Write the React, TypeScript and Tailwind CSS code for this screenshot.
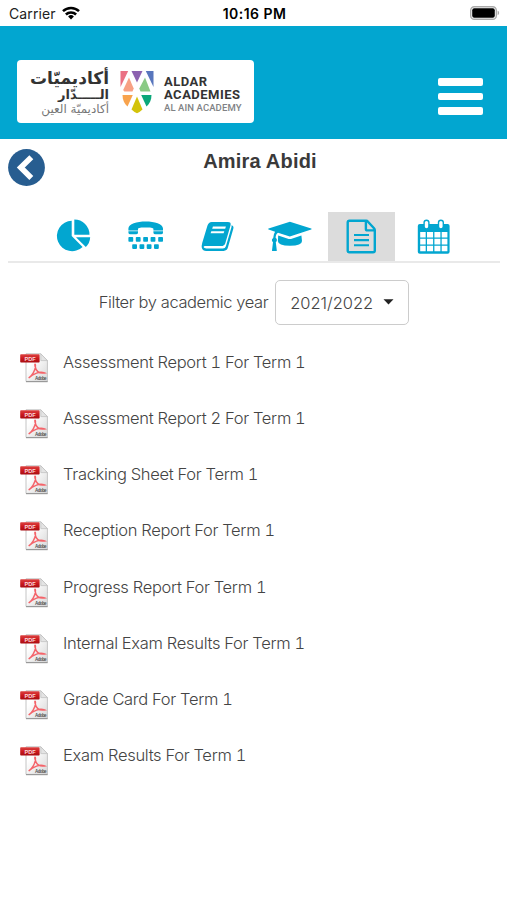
import type { ReactNode } from "react";

const reports = [
  "Assessment Report 1 For Term 1",
  "Assessment Report 2 For Term 1",
  "Tracking Sheet For Term 1",
  "Reception Report For Term 1",
  "Progress Report For Term 1",
  "Internal Exam Results For Term 1",
  "Grade Card For Term 1",
  "Exam Results For Term 1",
];

function StatusBar() {
  return (
    <div className="h-[26px] grid grid-cols-3 items-center pl-[9px] pr-[7px] pt-0.5 text-black">
      <div className="flex items-center gap-1.5">
        <span className="text-[14px] leading-none tracking-[0.12px] text-[#222]">Carrier</span>
        <svg className="-mt-0.5" width="18" height="14" viewBox="0 0 18 14" fill="none" stroke="#000" strokeWidth="2.5">
          <path d="M1 5.2a11.4 11.4 0 0 1 16 0" />
          <path d="M3.9 8.5a7.2 7.2 0 0 1 10.2 0" />
          <path d="M9 13.4l-2.9-2.9a4.1 4.1 0 0 1 5.8 0z" fill="#000" stroke="none" />
        </svg>
      </div>
      <span className="text-center text-[14px] leading-none font-semibold tracking-[0.45px] whitespace-nowrap">
        10:16 PM
      </span>
      <svg className="justify-self-end -mt-0.5" width="30" height="14" viewBox="0 0 30 14">
        <rect x="0.7" y="0.7" width="25.6" height="12.6" rx="3.6" fill="#fff" stroke="#aaa" strokeWidth="1.4" />
        <rect x="2.2" y="2.2" width="22.6" height="9.6" rx="2" fill="#000" />
        <path d="M27.6 4.8c2 .6 2 3.8 0 4.4z" fill="#aaa" />
      </svg>
    </div>
  );
}

function Shield() {
  return (
    <svg className="shrink-0" width="34" height="44" viewBox="0 0 34 44">
      <path d="M0.5 1H8.2L0.5 17z" fill="#ea7184" />
      <path d="M11.5 1H22.5L17 12.5z" fill="#8c62b0" />
      <path d="M25.8 1H33.5V17z" fill="#5876bd" />
      <path d="M9 7.5L13.7 18.5L12.5 21.5H4.3L3.2 20z" fill="#f7a184" />
      <path d="M25 7.5L30.5 21.5H20.5L19.3 18.5z" fill="#8aca85" />
      <path d="M2.5 25H12.8L7.5 36.5C4.3 33.7 2.5 30 2.5 25z" fill="#f8a34d" />
      <path d="M21.2 25H31.5C31.5 30 29.7 33.7 26.5 36.5z" fill="#0ba77a" />
      <path d="M17 26.5L22.5 39.5Q20 42 17 43.3Q14 42 11.5 39.5z" fill="#d3c30a" />
    </svg>
  );
}

function Header() {
  return (
    <header className="h-[113px] bg-[#02a6d0] flex items-start justify-between pl-[17px] pr-6">
      <div className="mt-[34px] w-[237px] h-[63px] bg-white rounded-[4px] flex items-start pl-[12px] pt-[10px]">
        <div
          dir="rtl"
          lang="ar"
          className="w-[80px] font-['DejaVu_Sans',sans-serif] font-bold text-[#333] whitespace-nowrap"
        >
          <p className="text-[17px] leading-[17px]">أكاديميّات</p>
          <p className="text-[13px] leading-[15px]">الـــــدّار</p>
          <p className="text-[12px] leading-[15px] font-normal text-[#777]">أكاديميّة العين</p>
        </div>
        <div className="ml-[11px]">
          <Shield />
        </div>
        <div className="ml-[10px] pt-[5px] font-['Roboto',sans-serif] whitespace-nowrap">
          <p className="text-[13px] leading-[13px] font-bold tracking-[0.5px] text-[#333]">ALDAR</p>
          <p className="text-[13px] leading-[13px] font-bold tracking-[0.5px] text-[#333]">ACADEMIES</p>
          <p className="text-[9.5px] leading-[14px] font-medium tracking-[0.1px] text-[#808285]">AL AIN ACADEMY</p>
        </div>
      </div>
      <button className="mt-[52px] flex flex-col gap-[7px]" aria-label="Menu">
        <span className="block w-[45px] h-[7.7px] rounded-[2px] bg-white" />
        <span className="block w-[45px] h-[7.7px] rounded-[2px] bg-white" />
        <span className="block w-[45px] h-[7.7px] rounded-[2px] bg-white" />
      </button>
    </header>
  );
}

function Tab({ active, children }: { active?: boolean; children: ReactNode }) {
  return (
    <button className={active ? "w-[67px] h-[49px] bg-[#dcdcdc]" : "w-[67px] h-[49px]"}>
      <svg width="67" height="49" viewBox="0 0 67 49" fill="#02a6d0">
        {children}
      </svg>
    </button>
  );
}

function Tabs() {
  return (
    <nav className="ml-2 mr-[7px] pl-8 flex gap-[5px] border-b-2 border-[#e9e9e9]">
      {/* pie chart */}
      <Tab>
        <path d="M31.7 8.8A15.2 15.2 0 1 0 42.6 35L31.7 24z" />
        <path d="M34.3 7.5A15.2 15.2 0 0 1 49.5 22.8H34.3z" />
        <path d="M36 25.3H50.2A15 15 0 0 1 45.8 35.1z" />
      </Tab>
      {/* teletype */}
      <Tab>
        <path d="M16.4 18.5V16.6C16.4 12 25 9.6 33.7 9.6S51 12 51 16.6V18.5H41.4V16.7C41.4 15.6 38 15.4 33.7 15.4S26 15.6 26 16.7V18.5z" />
        <path d="M16.4 19.3H26V20.4Q26 22.3 24 22.3H18.4Q16.4 22.3 16.4 20.4zM41.4 19.3H51V20.4Q51 22.3 49 22.3H43.4Q41.4 22.3 41.4 20.4z" />
        {[16.4, 23.8, 31.2, 38.6, 46.2].map((x) => (
          <rect key={x} x={x} y="25" width="4.8" height="4.7" rx="0.8" />
        ))}
        {[20.2, 27.5, 34.7, 42].map((x) => (
          <rect key={x} x={x} y="32.2" width="4.8" height="4.7" rx="0.8" />
        ))}
      </Tab>
      {/* book */}
      <Tab>
        <path
          fillRule="evenodd"
          d="M27.8 10H43.8Q47.5 10 46.5 13.4L41.3 31.2Q40.4 34 37.2 34H21.4Q19.2 34 19.7 35.3Q20.1 36.4 22.2 36.4H38.8Q41.2 36.4 41.9 34.2L47.3 15.8Q47.7 14.5 47.5 13.2Q50.1 14.1 49.3 16.8L43.9 35.6Q43 38.9 39.6 38.9H22.2Q18.8 38.9 17.8 35.7Q17.4 34.2 18.2 31L23.4 13.8Q24.5 10 27.8 10zM28.9 14.6L28.2 16.7H41.2L41.9 14.6zM27.3 19.2L26.6 21.3H39.6L40.3 19.2z"
        />
      </Tab>
      {/* graduation cap */}
      <Tab>
        <path d="M33.9 9.8L55.2 16.6Q56.2 17 55.2 17.5L34.6 24.3Q33.8 24.5 33 24.3L22 20.7Q19.8 21.7 19.6 25.8Q20.9 26.6 20.9 28.1Q20.9 29.5 19.8 30.3L20.8 38.4Q20.8 39.1 20.2 39.1H16.6Q15.9 39.1 16 38.4L17 30.3Q15.9 29.5 15.9 28.1Q15.9 26.6 17.2 25.9Q17.4 22.1 19.1 19.8L12.6 17.6Q11.5 17 12.6 16.6z" />
        <path d="M22.2 23.5L32.7 26.9Q33.8 27.2 35 26.9L45.4 23.5L46 29Q46 33.8 34 33.8T21.9 29z" />
      </Tab>
      {/* report */}
      <Tab active>
        <g fill="none" stroke="#02a6d0" strokeWidth="2.4" strokeLinejoin="round">
          <path d="M38.2 8.8H21.5Q19.7 8.8 19.7 10.6V38.5Q19.7 40.3 21.5 40.3H45Q46.8 40.3 46.8 38.5V18.2Q46.8 17.2 46 16.3L40 9.8Q39.2 8.8 38.2 8.8zM37.9 9.4V17Q37.9 18.4 39.3 18.4H46.3" />
          <path d="M26 23H41M26 28.1H41M26 33.3H41" strokeWidth="2.1" />
        </g>
      </Tab>
      {/* calendar */}
      <Tab>
        <rect x="17.8" y="12" width="31.8" height="29.7" rx="2" />
        <path
          fill="#fff"
          d="M20.2 20.1H25.7V25.5H20.2zM27 20.1H33.1V25.5H27zM34.4 20.1H40.4V25.5H34.4zM41.7 20.1H47.4V25.5H41.7zM20.2 26.8H25.7V32.5H20.2zM27 26.8H33.1V32.5H27zM34.4 26.8H40.4V32.5H34.4zM41.7 26.8H47.4V32.5H41.7zM20.2 33.8H25.7V39.3H20.2zM27 33.8H33.1V39.3H27zM34.4 33.8H40.4V39.3H34.4zM41.7 33.8H47.4V39.3H41.7z"
        />
        <rect x="24.1" y="8.2" width="4.8" height="8.8" rx="2.4" fill="#fff" stroke="#02a6d0" strokeWidth="1.4" />
        <rect x="38.5" y="8.2" width="4.8" height="8.8" rx="2.4" fill="#fff" stroke="#02a6d0" strokeWidth="1.4" />
      </Tab>
    </nav>
  );
}

function PdfIcon() {
  return (
    <svg className="shrink-0" width="29" height="30" viewBox="0 0 29 30">
      <defs>
        <linearGradient id="page" x1="0" y1="0" x2="1" y2="1">
          <stop offset="0.3" stopColor="#fff" />
          <stop offset="1" stopColor="#d6d6d6" />
        </linearGradient>
        <linearGradient id="band" x1="0" y1="0" x2="0" y2="1">
          <stop offset="0" stopColor="#dc4443" />
          <stop offset="0.5" stopColor="#cc1a1e" />
          <stop offset="1" stopColor="#a80d12" />
        </linearGradient>
      </defs>
      <path d="M6 0.8H20.8L27.4 7.6V28.4H6z" fill="url(#page)" stroke="#c4c4c4" strokeWidth="1" />
      <path d="M20.8 0.8V7.6H27.4z" fill="#e4e4e4" stroke="#bdbdbd" strokeWidth="0.7" />
      <path d="M6 28.6H27.6" stroke="#999" strokeWidth="1.2" />
      <path
        d="M8.7 25C12 23 15.3 17.5 15.5 13C15.5 10 14.4 11 15 13C16 18 19.5 20.8 24.6 20C20 18 13 20.5 8.7 25z"
        fill="none"
        stroke="#f4646a"
        strokeWidth="1.4"
      />
      <rect x="0.2" y="1.2" width="19.4" height="8.3" rx="0.8" fill="url(#band)" />
      <text x="4.6" y="7.5" fontSize="5.6" fontWeight="700" fill="#fbdcdc" fontFamily="Liberation Sans, sans-serif">
        PDF
      </text>
      <text x="15" y="27" fontSize="4.5" fontWeight="700" fill="#555" fontFamily="Liberation Sans, sans-serif" textLength="11.6">
        Adobe
      </text>
    </svg>
  );
}

export default function App() {
  return (
    <div className="w-full h-[900px] bg-white overflow-hidden font-['Inter','Liberation_Sans',sans-serif]">
      <StatusBar />
      <Header />

      <div className="h-[73px] grid grid-cols-[37px_1fr_24px] items-start px-2 pt-[10px]">
        <button aria-label="Back">
          <svg width="37" height="37" viewBox="0 0 37 37">
            <circle cx="18.5" cy="18.5" r="18.4" fill="#275d90" />
            <path d="M23.3 8.3L12.8 18.6L23.3 28.9" fill="none" stroke="#fff" strokeWidth="5.6" />
          </svg>
        </button>
        <h1 className="-mt-px text-center text-[20px] leading-[26px] font-bold tracking-[0.2px] text-[#3a3a3a] font-['Liberation_Sans',sans-serif]">
          Amira Abidi
        </h1>
      </div>

      <Tabs />

      <div className="mt-[17px] pl-px flex items-center justify-center gap-[7px] font-light text-[#444]">
        <label className="text-[16.5px] tracking-[-0.4px] whitespace-nowrap">Filter by academic year</label>
        <button className="w-[134px] h-[45px] flex items-center justify-between px-[14px] border border-[#ccc] rounded-[5px] text-[16.5px]">
          <span className="pt-0.5 tracking-[-0.05px]">2021/2022</span>
          <svg className="-mt-0.5" width="11" height="6" viewBox="0 0 11 6">
            <path d="M0.5 0.3H10.5L5.5 5.6z" fill="#222" />
          </svg>
        </button>
      </div>

      <ul className="mt-[27px] pl-5">
        {reports.map((name) => (
          <li key={name} className="h-[56.14px] flex items-start gap-[14px]">
            <div className="pt-px">
              <PdfIcon />
            </div>
            <span className="text-[16.5px] leading-[21px] tracking-[-0.3px] font-light tabular-nums text-[#444]">
              {name}
            </span>
          </li>
        ))}
      </ul>
    </div>
  );
}
